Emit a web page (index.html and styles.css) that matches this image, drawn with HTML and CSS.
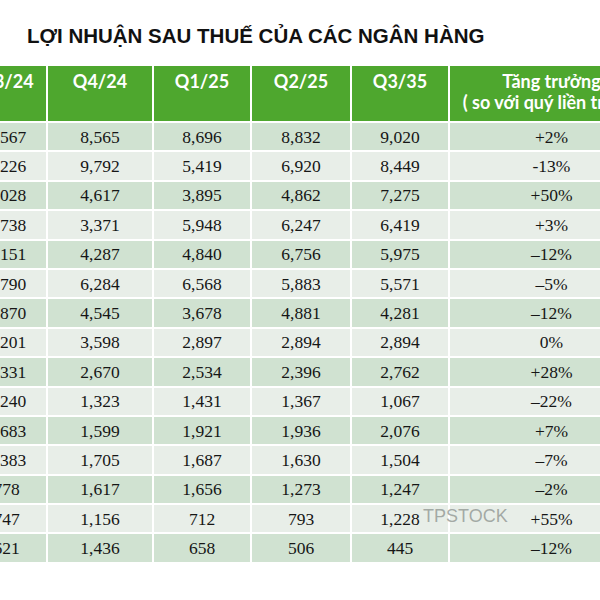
FILE: index.html
```html
<!DOCTYPE html>
<html lang="vi">
<head>
<meta charset="utf-8">
<title>Lợi nhuận sau thuế của các ngân hàng</title>
<link rel="stylesheet" href="styles.css">
</head>
<body>
<div class="page">
  <h1 class="title">LỢI NHUẬN SAU THUẾ CỦA CÁC NGÂN HÀNG</h1>
  <div class="table-wrap">
    <table class="profit">
      <colgroup>
        <col class="c0"><col class="c1"><col class="c2"><col class="c3"><col class="c4"><col class="c5">
      </colgroup>
      <thead>
        <tr>
          <th>Q3/24</th><th>Q4/24</th><th>Q1/25</th><th>Q2/25</th><th>Q3/35</th>
          <th>Tăng trưởng<br>( so với quý liền trước)</th>
        </tr>
      </thead>
      <tbody>
        <tr><td>8,567</td><td>8,565</td><td>8,696</td><td>8,832</td><td>9,020</td><td>+2%</td></tr>
        <tr><td>9,226</td><td>9,792</td><td>5,419</td><td>6,920</td><td>8,449</td><td>-13%</td></tr>
        <tr><td>5,028</td><td>4,617</td><td>3,895</td><td>4,862</td><td>7,275</td><td>+50%</td></tr>
        <tr><td>6,738</td><td>3,371</td><td>5,948</td><td>6,247</td><td>6,419</td><td>+3%</td></tr>
        <tr><td>6,151</td><td>4,287</td><td>4,840</td><td>6,756</td><td>5,975</td><td>–12%</td></tr>
        <tr><td>5,790</td><td>6,284</td><td>6,568</td><td>5,883</td><td>5,571</td><td>–5%</td></tr>
        <tr><td>4,870</td><td>4,545</td><td>3,678</td><td>4,881</td><td>4,281</td><td>–12%</td></tr>
        <tr><td>2,201</td><td>3,598</td><td>2,897</td><td>2,894</td><td>2,894</td><td>0%</td></tr>
        <tr><td>2,331</td><td>2,670</td><td>2,534</td><td>2,396</td><td>2,762</td><td>+28%</td></tr>
        <tr><td>1,240</td><td>1,323</td><td>1,431</td><td>1,367</td><td>1,067</td><td>–22%</td></tr>
        <tr><td>1,683</td><td>1,599</td><td>1,921</td><td>1,936</td><td>2,076</td><td>+7%</td></tr>
        <tr><td>1,383</td><td>1,705</td><td>1,687</td><td>1,630</td><td>1,504</td><td>–7%</td></tr>
        <tr><td>778</td><td>1,617</td><td>1,656</td><td>1,273</td><td>1,247</td><td>–2%</td></tr>
        <tr><td>747</td><td>1,156</td><td>712</td><td>793</td><td>1,228</td><td>+55%</td></tr>
        <tr><td>621</td><td>1,436</td><td>658</td><td>506</td><td>445</td><td>–12%</td></tr>
      </tbody>
    </table>
    <div class="watermark">TPSTOCK</div>
  </div>
</div>
</body>
</html>
```
FILE: styles.css
```css
html, body {
  margin: 0;
  padding: 0;
  background: #ffffff;
}

.page {
  width: 600px;
  height: 600px;
  overflow: hidden;
}

.title {
  margin: 0;
  padding: 26px 0 0 27px;
  height: 40px;
  box-sizing: border-box;
  font-family: "Liberation Sans", Arial, sans-serif;
  font-weight: 700;
  font-size: 20.5px;
  line-height: 20px;
  color: #111111;
  letter-spacing: 0;
}

.table-wrap {
  position: relative;
  margin-top: 26px;
  width: 600px;
  overflow: hidden;
}

.profit {
  margin-left: -35px;
  border-collapse: collapse;
  table-layout: fixed;
  width: 688px;
}

.c0 { width: 81px; }
.c1 { width: 106px; }
.c2 { width: 98px; }
.c3 { width: 100px; }
.c4 { width: 98px; }
.c5 { width: 205px; }

.profit th {
  background: #4ea72e;
  color: #ffffff;
  font-family: Lato, "Liberation Sans", sans-serif;
  font-weight: 700;
  font-size: 18px;
  line-height: 21px;
  height: 56px;
  box-sizing: border-box;
  padding: 5px 0 0;
  vertical-align: top;
  text-align: center;
  white-space: nowrap;
  border: 2px solid #ffffff;
  border-top: 0;
}

.profit td {
  height: 29.4px;
  padding: 0;
  box-sizing: border-box;
  text-align: center;
  vertical-align: middle;
  font-family: "Liberation Serif", "Times New Roman", serif;
  font-size: 17.5px;
  line-height: 20px;
  color: #161616;
  border: 2px solid #ffffff;
  white-space: nowrap;
}

.profit tbody tr:nth-child(odd) td {
  background: #d0e2d1;
}

.profit tbody tr:nth-child(even) td {
  background: #e8eee8;
}

.watermark {
  position: absolute;
  left: 423px;
  top: 440px;
  font-family: "Liberation Sans", Arial, sans-serif;
  font-size: 18px;
  line-height: 20px;
  color: rgba(140, 146, 142, 0.75);
  letter-spacing: 0;
}
```
